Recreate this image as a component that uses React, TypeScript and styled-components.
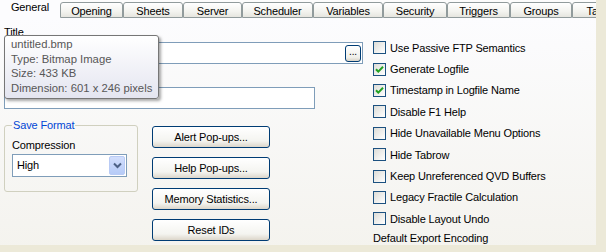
import React from "react";
import styled, { createGlobalStyle, css } from "styled-components";

const GlobalStyle = createGlobalStyle`
  html, body { margin: 0; padding: 0; background: #ece9d8; }
  body {
    font-family: "Liberation Sans", Arial, sans-serif;
    font-size: 11px;
    letter-spacing: -0.15px;
    color: #000;
  }
`;

const Window = styled.div`
  position: relative;
  width: 606px;
  height: 252px;
  background: #ece9d8;
  overflow: hidden;
`;

const Frame = styled.div`
  width: 596px;
  height: 245px;
  display: flex;
  flex-direction: column;
  overflow: hidden;
`;

const TabStrip = styled.div`
  flex: none;
  display: flex;
  align-items: flex-end;
  height: 18px;
  background: #fcfcfc;
`;

const Tab = styled.div<{ $w: number; $active?: boolean }>`
  flex: none;
  box-sizing: border-box;
  width: ${(p) => p.$w}px;
  text-align: center;
  white-space: nowrap;
  overflow: hidden;
  line-height: 12px;
  ${(p) =>
    p.$active
      ? css`
          height: 18px;
          padding-top: 1px;
          background: #fcfcfe;
        `
      : css`
          height: 16px;
          padding-top: 2px;
          border: 1px solid #919b9c;
          border-radius: 3px 3px 0 0;
          background: linear-gradient(#ffffff, #f3f3ef 60%, #e6e5df);
        `}
`;

const Panel = styled.div`
  flex: 1;
  display: flex;
  padding-left: 4px;
  background: linear-gradient(#fcfcfe, #f4f3ee);
`;

const LeftCol = styled.div`
  width: 359px;
  padding-top: 8px;
`;

const FieldLabel = styled.div`
  height: 13px;
  line-height: 13px;
`;

const Field = styled.div<{ $w: number; $mt: number }>`
  box-sizing: border-box;
  width: ${(p) => p.$w}px;
  height: 22px;
  margin-top: ${(p) => p.$mt}px;
  border: 1px solid #7f9db9;
  background: #fff;
  display: flex;
  align-items: center;
  justify-content: flex-end;
  padding-right: 1px;
`;

const BrowseButton = styled.div`
  box-sizing: border-box;
  width: 16px;
  height: 17px;
  border: 1px solid #003c74;
  border-radius: 3px;
  background: linear-gradient(#ffffff, #f0f0ea 75%, #d8d2c6);
  text-align: center;
  line-height: 12px;
  font-size: 10px;
`;

const LowerRow = styled.div`
  display: flex;
  align-items: flex-start;
  margin-top: 10px;
`;

const GroupBox = styled.fieldset`
  box-sizing: border-box;
  width: 134px;
  margin: 0;
  padding: 7px 8px 14px 7px;
  border: 1px solid #d0d0bf;
  border-radius: 3px;
`;

const Legend = styled.legend`
  padding: 0 1px;
  line-height: 13px;
  color: #0046d5;
`;

const Select = styled.div`
  box-sizing: border-box;
  width: 115px;
  height: 23px;
  margin-top: 2px;
  border: 1px solid #7f9db9;
  background: #fff;
  display: flex;
  align-items: stretch;
`;

const SelectValue = styled.div`
  flex: 1;
  padding-left: 4px;
  line-height: 21px;
`;

const DropButton = styled.div`
  box-sizing: border-box;
  width: 16px;
  margin: 1px;
  border: 1px solid #b9cbf5;
  border-radius: 2px;
  background: linear-gradient(#d2defc, #b6cbf7);
  display: flex;
  align-items: center;
  justify-content: center;
`;

const ButtonCol = styled.div`
  display: flex;
  flex-direction: column;
  gap: 9px;
  margin-left: 14px;
  margin-top: 7px;
`;

const PushButton = styled.div`
  box-sizing: border-box;
  width: 118px;
  height: 22px;
  border: 1px solid #003c74;
  border-radius: 3px;
  background: linear-gradient(#ffffff, #f4f4f0 70%, #dcd6ca);
  text-align: center;
  line-height: 20px;
`;

const RightCol = styled.div`
  margin-left: 10px;
  padding-top: 19px;
  display: grid;
  grid-auto-rows: 21.4px;
`;

const CheckRow = styled.div`
  display: flex;
  align-items: center;
  gap: 4px;
  white-space: nowrap;
`;

const CheckBox = styled.div`
  box-sizing: border-box;
  width: 13px;
  height: 13px;
  border: 1px solid #1c5180;
  background: linear-gradient(135deg, #dcdcd7, #ffffff);
  display: flex;
  align-items: center;
  justify-content: center;
`;

const PlainRow = styled.div`
  line-height: 15px;
  margin-top: 1px;
`;

const Tooltip = styled.div`
  position: absolute;
  left: 4px;
  top: 35px;
  box-sizing: border-box;
  width: 155px;
  height: 64px;
  padding: 1px 0 0 6px;
  border: 1px solid #767676;
  border-radius: 3px;
  background: linear-gradient(#ffffff, #e4e5f0);
  box-shadow: 2px 2px 3px rgba(0, 0, 0, 0.35);
  font-family: "Liberation Sans", Arial, sans-serif;
  font-size: 11.3px;
  letter-spacing: 0;
  line-height: 14.7px;
  white-space: nowrap;
  color: #575757;
`;

const tabs = [
  { label: "General", w: 60, active: true },
  { label: "Opening", w: 63 },
  { label: "Sheets", w: 60 },
  { label: "Server", w: 59 },
  { label: "Scheduler", w: 71 },
  { label: "Variables", w: 70 },
  { label: "Security", w: 64 },
  { label: "Triggers", w: 63 },
  { label: "Groups", w: 62 },
  { label: "Tables", w: 60 },
];

const options = [
  { label: "Use Passive FTP Semantics", checked: false },
  { label: "Generate Logfile", checked: true },
  { label: "Timestamp in Logfile Name", checked: true },
  { label: "Disable F1 Help", checked: false },
  { label: "Hide Unavailable Menu Options", checked: false },
  { label: "Hide Tabrow", checked: false },
  { label: "Keep Unreferenced QVD Buffers", checked: false },
  { label: "Legacy Fractile Calculation", checked: false },
  { label: "Disable Layout Undo", checked: false },
];

const buttons = ["Alert Pop-ups...", "Help Pop-ups...", "Memory Statistics...", "Reset IDs"];

function Check() {
  return (
    <svg width="9" height="9" viewBox="0 0 9 9">
      <path d="M1 4.2 L3.3 6.6 L8 1.8" fill="none" stroke="#21a121" strokeWidth="2" />
    </svg>
  );
}

function Chevron() {
  return (
    <svg width="9" height="7" viewBox="0 0 9 7">
      <path d="M1 1.5 L4.5 5 L8 1.5" fill="none" stroke="#4d6185" strokeWidth="2" />
    </svg>
  );
}

export default function App() {
  return (
    <Window>
      <GlobalStyle />
      <Frame>
        <TabStrip>
          {tabs.map((t) => (
            <Tab key={t.label} $w={t.w} $active={t.active}>
              {t.label}
            </Tab>
          ))}
        </TabStrip>
        <Panel>
          <LeftCol>
            <FieldLabel>Title</FieldLabel>
            <Field $w={359} $mt={3}>
              <BrowseButton>...</BrowseButton>
            </Field>
            <Field $w={311} $mt={23} />
            <LowerRow>
              <GroupBox>
                <Legend>Save Format</Legend>
                <FieldLabel>Compression</FieldLabel>
                <Select>
                  <SelectValue>High</SelectValue>
                  <DropButton>
                    <Chevron />
                  </DropButton>
                </Select>
              </GroupBox>
              <ButtonCol>
                {buttons.map((b) => (
                  <PushButton key={b}>{b}</PushButton>
                ))}
              </ButtonCol>
            </LowerRow>
          </LeftCol>
          <RightCol>
            {options.map((o) => (
              <CheckRow key={o.label}>
                <CheckBox>{o.checked && <Check />}</CheckBox>
                {o.label}
              </CheckRow>
            ))}
            <PlainRow>Default Export Encoding</PlainRow>
          </RightCol>
        </Panel>
      </Frame>
      <Tooltip>
        <div>untitled.bmp</div>
        <div>Type: Bitmap Image</div>
        <div>Size: 433 KB</div>
        <div>Dimension: 601 x 246 pixels</div>
      </Tooltip>
    </Window>
  );
}
